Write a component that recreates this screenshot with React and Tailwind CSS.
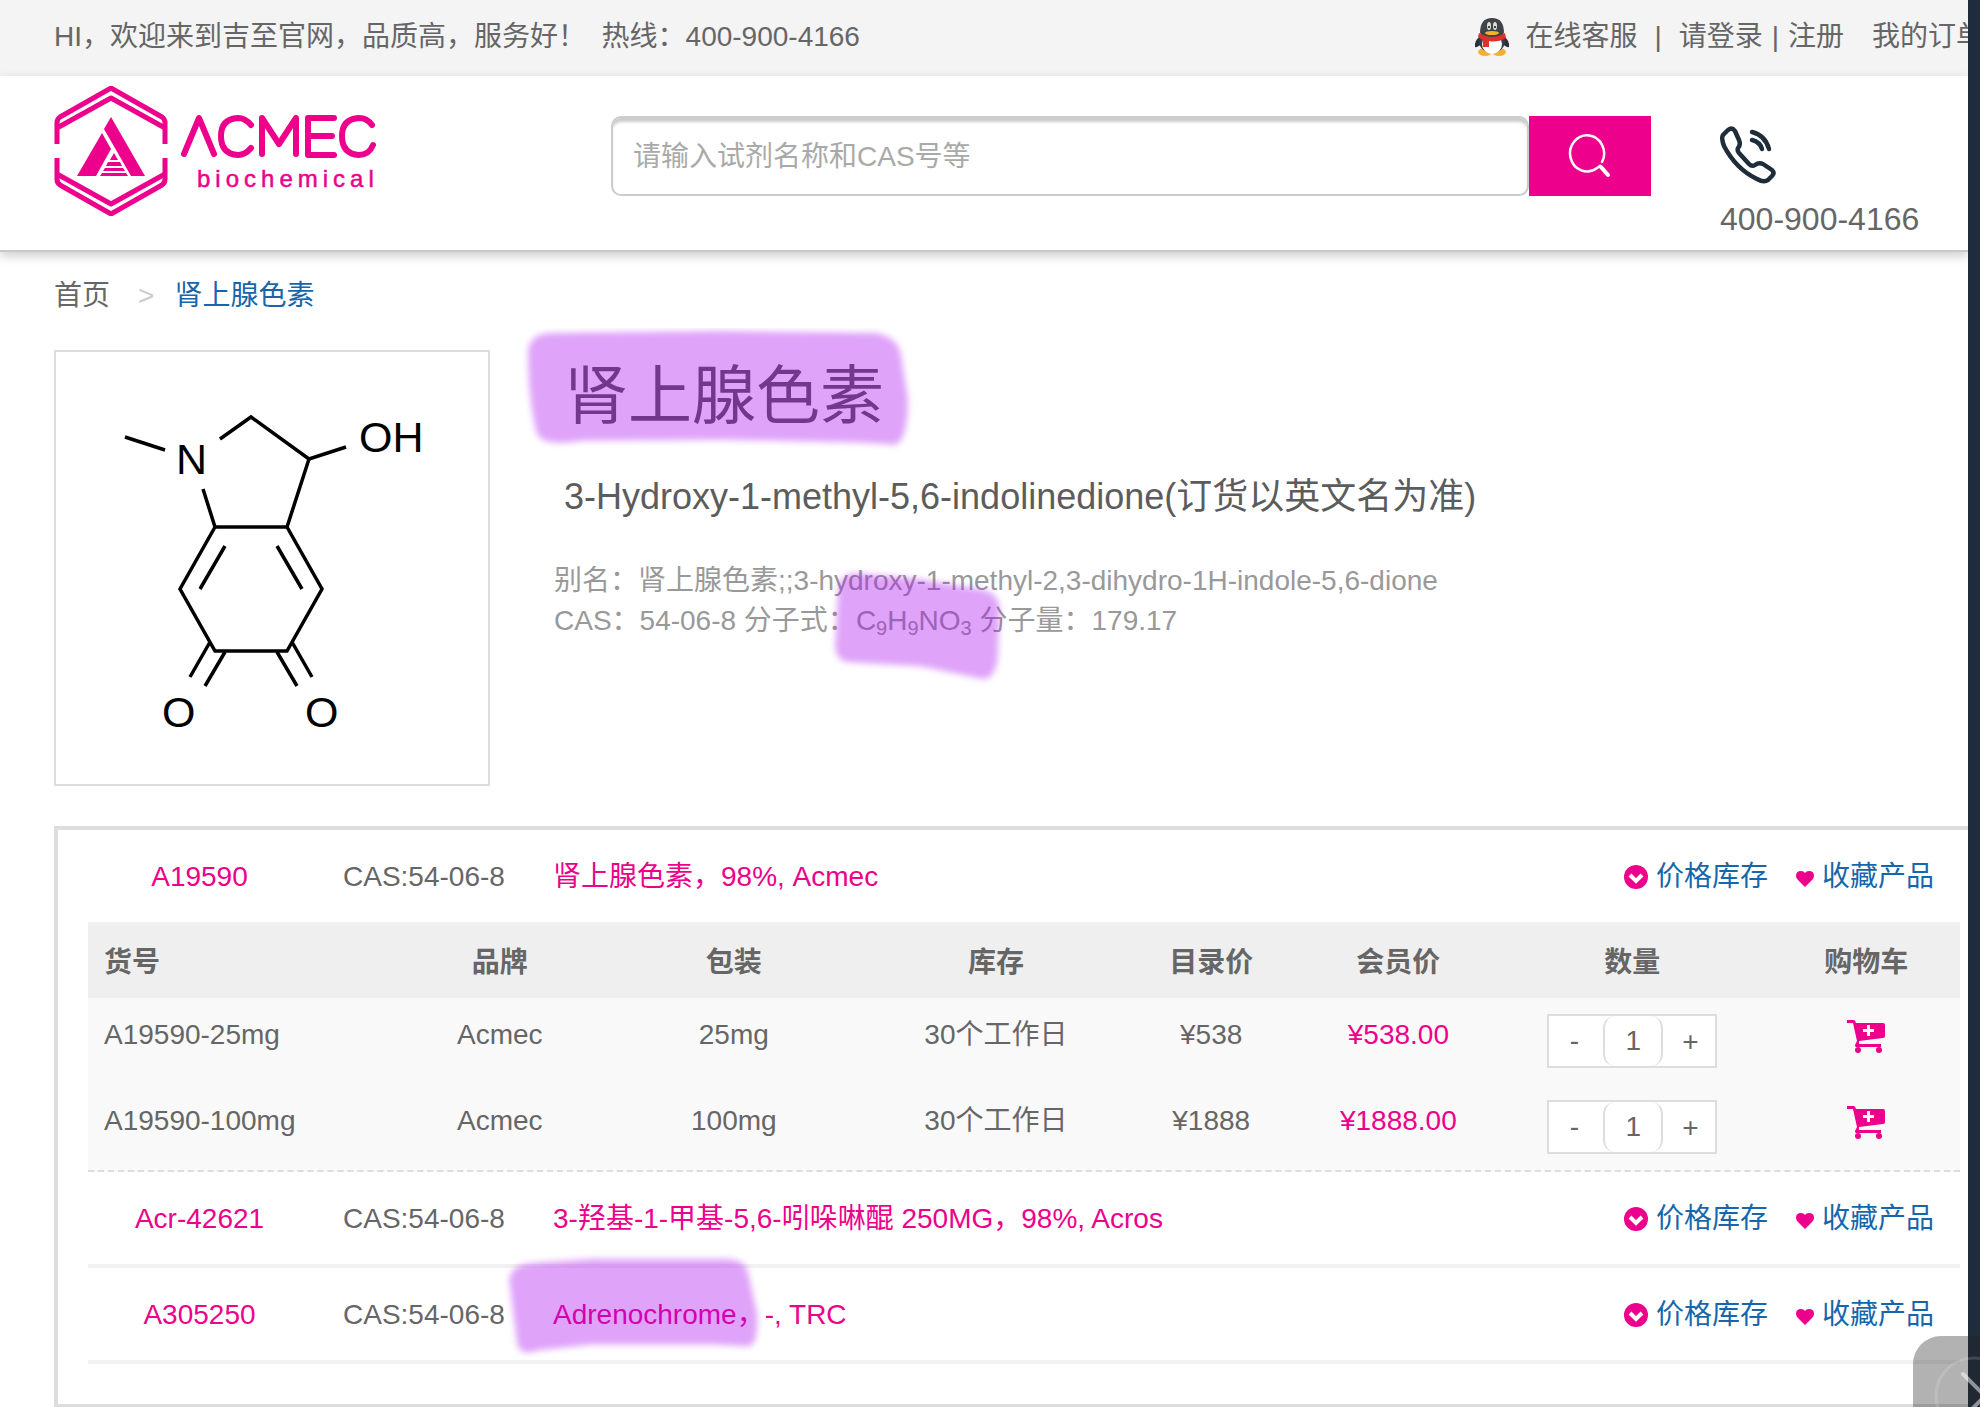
const PINK = '#ec008c';

const groups = [
  {
    code: 'A19590',
    cas: 'CAS:54-06-8',
    name: '肾上腺色素，98%, Acmec',
    skus: [
      { id: 'A19590-25mg', brand: 'Acmec', pack: '25mg', stock: '30个工作日', list: '¥538', member: '¥538.00' },
      { id: 'A19590-100mg', brand: 'Acmec', pack: '100mg', stock: '30个工作日', list: '¥1888', member: '¥1888.00' },
    ],
  },
  { code: 'Acr-42621', cas: 'CAS:54-06-8', name: '3-羟基-1-甲基-5,6-吲哚啉醌 250MG，98%, Acros' },
  { code: 'A305250', cas: 'CAS:54-06-8', name: 'Adrenochrome，-, TRC', marked: true },
];

const columns = [
  { label: '货号', width: 'w-[17%]' },
  { label: '品牌', width: 'w-[10%]' },
  { label: '包装', width: 'w-[15%]' },
  { label: '库存', width: 'w-[13%]' },
  { label: '目录价', width: 'w-[10%]' },
  { label: '会员价', width: 'w-[10%]' },
  { label: '数量', width: 'w-[15%]' },
  { label: '购物车', width: 'w-[10%]' },
];

function Logo() {
  return (
    <svg width="322" height="130" viewBox="0 0 322 130" role="img" aria-label="ACMEC biochemical">
      <g fill="none" stroke={PINK} strokeWidth="5" strokeLinejoin="round">
        <path d="M3 58V37Q3 33 6 31L57 2L108 31Q111 33 111 37V58" />
        <path d="M3 42L57 12L111 42" />
        <path d="M3 72V93Q3 97 6 99L57 128L108 99Q111 97 111 93V72" />
        <path d="M3 88L57 118L111 88" />
      </g>
      <g fill={PINK}>
        <path d="M57 31L91 90H77L50 43Z" />
        <path d="M48 47L57 63L42 90H23Z" />
        <path d="M60 67L64 74H56Z" />
        <path d="M54 76H66L68 80H52ZM51 82H69L71 85H49ZM48 87H72L74 90H46Z" />
      </g>
      <g fill="none" stroke={PINK} strokeWidth="6" strokeLinecap="round" strokeLinejoin="round">
        <path d="M130 68L145 32L160 68" />
        <path d="M197 39Q191 32 184 32Q167 33 167 50Q167 68 184 69Q191 69 197 62" />
        <path d="M208 68V32L225 58L242 32V68" />
        <path d="M280 32H254V69H280M254 50H278" />
        <path d="M318 39Q313 32 305 32Q288 33 288 50Q288 68 305 69Q315 69 319 59" />
      </g>
      <text x="143" y="101" fill={PINK} stroke={PINK} strokeWidth="0.5" fontSize="24" letterSpacing="5" fontFamily="Liberation Sans, sans-serif">
        biochemical
      </text>
    </svg>
  );
}

function Penguin() {
  return (
    <svg width="34" height="38" viewBox="0 0 34 38" aria-hidden="true">
      <ellipse cx="10" cy="34" rx="7" ry="4" fill="#f5b030" />
      <ellipse cx="24" cy="34" rx="7" ry="4" fill="#f5b030" />
      <path d="M6 18Q-1 22 0 29Q3 30 6 26ZM28 18Q35 22 34 29Q31 30 28 26Z" fill="#2c3138" />
      <ellipse cx="17" cy="23" rx="13" ry="12" fill="#3a3f45" />
      <ellipse cx="17" cy="26" rx="10" ry="10" fill="#fff" />
      <path d="M5 15Q5 0 17 0Q29 0 29 15Q25 20 17 20Q9 20 5 15Z" fill="#3f4449" />
      <ellipse cx="14" cy="8" rx="2" ry="4" fill="#ddd" />
      <ellipse cx="20" cy="8" rx="2" ry="4" fill="#ddd" />
      <circle cx="14" cy="9" r="1" fill="#111" />
      <circle cx="20" cy="9" r="1" fill="#111" />
      <ellipse cx="17" cy="15" rx="7" ry="2" fill="#f0b429" />
      <path d="M4 15Q17 23 30 15L31 20Q22 25 14 23V29H8V22L3 19Z" fill="#e0302c" />
    </svg>
  );
}

function SearchIcon() {
  return (
    <svg width="44" height="44" viewBox="0 0 44 44" fill="none" stroke="#fff" strokeWidth="2.5" strokeLinecap="round" aria-hidden="true">
      <path d="M34 28A17 18 0 1 0 29 34L32 32L40 41" />
      <path d="M33 33L40 41" strokeWidth="4" />
    </svg>
  );
}

function PhoneIcon() {
  return (
    <svg width="56" height="58" viewBox="0 0 56 58" fill="none" stroke="#1f2c3a" strokeWidth="4.5" strokeLinecap="round" strokeLinejoin="round" aria-hidden="true">
      <path d="M8 4Q12 1 15 5L19 14Q21 19 18 22Q17 25 19 27L29 38Q32 41 35 39Q39 36 43 38L52 44Q55 47 52 50L48 54Q44 57 37 53Q16 43 4 20Q1 12 3 9Z" />
      <path d="M32 6Q45 9 49 23" />
      <path d="M32 14Q40 16 42 23" />
    </svg>
  );
}

function CartIcon() {
  return (
    <svg width="38" height="33" viewBox="0 0 38 33" fill={PINK} aria-hidden="true">
      <path d="M0 0H7Q8 0 9 3H36Q38 3 38 5V16Q38 18 36 18L12 21V24H34V27H9Q8 27 8 25L10 21L6 3H0Z" />
      <circle cx="11" cy="30" r="3" />
      <circle cx="32" cy="30" r="3" />
      <path d="M20 5H23V9H27V12H23V16H20V12H16V9H20Z" fill="#fff" />
    </svg>
  );
}

function Molecule() {
  return (
    <svg viewBox="0 0 432 432" className="block w-full" role="img" aria-label="肾上腺色素">
      <g fill="none" stroke="#000" strokeWidth="3.5" strokeLinejoin="miter">
        <path d="M69 85L109 98M164 87L195 65L253 107L290 95M253 107L231 175H159L147 137" />
        <path d="M159 175L124 237L159 299H231L266 237L231 175" />
        <path d="M169 194L144 237M221 194L246 237" />
        <path d="M154 290L134 325M169 300L149 334M236 290L256 325M221 300L241 334" />
      </g>
      <g fontFamily="Liberation Sans, Arial, sans-serif" fontSize="43">
        <text x="120" y="122">N</text>
        <text x="303" y="100">OH</text>
        <text x="106" y="375">O</text>
        <text x="249" y="375">O</text>
      </g>
    </svg>
  );
}

// highlighter stroke laid over a piece of text
function Marker({ className, viewBox, d }) {
  return (
    <svg className={`pointer-events-none absolute ${className}`} viewBox={viewBox} aria-hidden="true">
      <path d={d} fill="#a806ef" fillOpacity="0.37" className="blur-[3px]" />
    </svg>
  );
}

function RowActions() {
  return (
    <div className="ml-auto flex items-center gap-7 pr-[26px] text-[#1666ab]">
      <a href="#stock" className="flex items-center gap-2">
        <svg width="24" height="24" viewBox="0 0 24 24" aria-hidden="true">
          <circle cx="12" cy="12" r="12" fill={PINK} />
          <path d="M6 10L12 16L18 10" fill="none" stroke="#fff" strokeWidth="4" />
        </svg>
        价格库存
      </a>
      <a href="#favorite" className="flex items-center gap-2">
        <svg width="18" height="16" viewBox="0 0 18 16" className="mt-1" aria-hidden="true">
          <path d="M9 16L2 9Q0 7 0 5Q0 0 5 0Q8 0 9 2Q10 0 13 0Q18 0 18 5Q18 7 16 9Z" fill={PINK} />
        </svg>
        收藏产品
      </a>
    </div>
  );
}

function Quantity({ id }) {
  return (
    <div className="mx-auto flex h-[54px] w-[170px] border-2 border-[#ddd] bg-white">
      <button type="button" className="flex-1 pr-1" aria-label={`减少 ${id}`}>-</button>
      <input
        defaultValue="1"
        aria-label={`数量 ${id}`}
        className="w-[60px] rounded-[12px] border-x-2 border-[#ddd] bg-white text-center outline-none"
      />
      <button type="button" className="flex-1 pt-[2px] pl-[2px]" aria-label={`增加 ${id}`}>+</button>
    </div>
  );
}

function SkuTable({ skus }) {
  return (
    <div className="border-b-2 border-dashed border-[#ddd] bg-[#f9f9f9]">
      <table className="w-full table-fixed text-center">
        <thead className="bg-[#efefef]">
          <tr>
            {columns.map((col) => (
              <th key={col.label} className={`${col.width} h-[72px] pt-[2px] pb-0 font-bold first:pl-4 first:text-left`}>
                {col.label}
              </th>
            ))}
          </tr>
        </thead>
        <tbody>
          {skus.map((sku) => (
            <tr key={sku.id} className="align-top">
              <td className="pt-[17px] pl-4 text-left">{sku.id}</td>
              <td className="pt-[17px]">{sku.brand}</td>
              <td className="pt-[17px]">{sku.pack}</td>
              <td className="pt-[17px]">{sku.stock}</td>
              <td className="pt-[17px]">{sku.list}</td>
              <td className="pt-[17px] text-[#ec008c]">{sku.member}</td>
              <td className="py-4">
                <Quantity id={sku.id} />
              </td>
              <td className="pt-[22px]">
                <button type="button" className="mx-auto block" aria-label={`加入购物车 ${sku.id}`}>
                  <CartIcon />
                </button>
              </td>
            </tr>
          ))}
        </tbody>
      </table>
    </div>
  );
}

export default function App() {
  return (
    <div
      lang="zh-CN"
      className="relative flex min-h-screen overflow-hidden bg-white font-['Liberation_Sans','Noto_Sans_CJK_SC',sans-serif] text-[28px] leading-10 text-[#666]"
    >
      <div className="min-w-0 flex-1 overflow-hidden">
        <div className="flex h-[76px] items-center bg-[#f4f4f4] pb-[2px] pl-[54px] whitespace-nowrap">
          <p>HI，欢迎来到吉至官网，品质高，服务好！&nbsp; 热线：400-900-4166</p>
          <nav className="-mr-4 ml-auto flex items-center">
            <Penguin />
            <a href="#service" className="ml-4">在线客服</a>
            <span className="mx-[17px]">|</span>
            <a href="#login">请登录</a>
            <span className="mx-[9px]">|</span>
            <a href="#register">注册</a>
            <a href="#orders" className="ml-7">我的订单</a>
          </nav>
        </div>

        <header className="flex h-[176px] border-b-2 border-[#c8c8c8] pl-[54px] shadow-[0_4px_10px_rgba(0,0,0,0.2)]">
          <a href="#home" className="mt-[10px] shrink-0">
            <Logo />
          </a>
          <form className="mt-10 ml-[235px] flex h-20 flex-1">
            <input
              type="search"
              aria-label="搜索"
              placeholder="请输入试剂名称和CAS号等"
              className="min-w-0 flex-1 rounded-[10px] border-2 border-[#ccc] px-5 pt-[2px] shadow-[inset_0_5px_3px_-1px_#ccc] outline-none placeholder:text-[#a9a9a9]"
            />
            <button type="submit" aria-label="搜索" className="flex w-[122px] items-center justify-center bg-[#ec008c]">
              <SearchIcon />
            </button>
          </form>
          <div className="mt-[50px] ml-[69px] w-[248px] shrink-0 text-[32px]">
            <PhoneIcon />
            <p className="mt-[15px]">400-900-4166</p>
          </div>
        </header>

        <main className="pl-[54px]">
          <nav className="flex h-[98px] items-center pb-[10px]">
            <a href="#home">首页</a>
            <span className="mr-5 ml-7 text-[#ccc]">&gt;</span>
            <a href="#adrenochrome" className="text-[#1666ab]">肾上腺色素</a>
          </nav>

          <section className="flex">
            <div className="w-[436px] shrink-0 border-2 border-[#ddd]">
              <Molecule />
            </div>
            <div className="ml-16">
              <h1 className="relative mt-[10px] ml-[10px] w-fit text-[64px] leading-[72px] text-[#555]">
                肾上腺色素
                <Marker
                  className="-top-8 -left-11 w-[396px]"
                  viewBox="0 0 390 130"
                  d="M8 22Q10 6 30 5L200 3L350 5Q370 8 375 25L382 70Q382 110 370 115L340 113L200 110L60 111Q20 118 16 102Q8 70 8 22Z"
                />
              </h1>
              <h2 className="mt-[41px] ml-[10px] text-[36px] leading-[48px] text-[#5c5c5c]">
                3-Hydroxy-1-methyl-5,6-indolinedione(订货以英文名为准)
              </h2>
              <p className="mt-10 text-[#999]">别名：肾上腺色素;;3-hydroxy-1-methyl-2,3-dihydro-1H-indole-5,6-dione</p>
              <p className="text-[#999]">
                CAS：54-06-8 分子式：
                <span className="relative">
                  C<sub className="text-[20px]">9</sub>H<sub className="text-[20px]">9</sub>NO<sub className="text-[20px]">3</sub>
                  <Marker
                    className="-top-10 -left-7 w-[182px]"
                    viewBox="0 0 176 120"
                    d="M10 22Q12 8 30 8L90 14L150 24Q166 28 166 44L164 92Q160 112 148 110L90 98L20 94Q6 92 7 76Z"
                  />
                </span>{' '}
                分子量：179.17
              </p>
            </div>
          </section>

          <section className="mt-10 border-4 border-r-0 border-[#ddd] pr-2 pb-10 pl-[30px]">
            {groups.map((g) => (
              <div key={g.code}>
                <div className="flex h-24 items-center border-b-4 border-[#f2f2f2] pt-[2px]">
                  <a href="#product" className="w-[223px] text-center text-[#ec008c]">{g.code}</a>
                  <span className="ml-8 w-[210px]">{g.cas}</span>
                  <a href="#product" className="relative text-[#ec008c]">
                    {g.name}
                    {g.marked && (
                      <Marker
                        className="-top-11 -left-[52px] w-[268px]"
                        viewBox="0 0 264 110"
                        d="M8 28Q10 14 30 12L90 8L220 8Q240 8 243 20L252 60Q254 92 244 94L210 92L90 92L36 98Q20 104 16 92Z"
                      />
                    )}
                  </a>
                  <RowActions />
                </div>
                {g.skus && <SkuTable skus={g.skus} />}
              </div>
            ))}
          </section>
        </main>
      </div>

      <div className="w-3 shrink-0 bg-[#1f2c3b]" />

      <button
        type="button"
        aria-label="展开"
        className="absolute right-0 bottom-0 h-[72px] w-[67px] overflow-hidden rounded-tl-[28px] bg-[#222]/35"
      >
        <svg width="67" height="72" viewBox="0 0 67 72" fill="none" stroke="#fff" aria-hidden="true">
          <circle cx="61" cy="60" r="38" strokeWidth="3" strokeOpacity="0.15" />
          <path d="M50 38L72 60L50 82" strokeWidth="4" strokeOpacity="0.5" strokeLinecap="round" />
        </svg>
      </button>
    </div>
  );
}
